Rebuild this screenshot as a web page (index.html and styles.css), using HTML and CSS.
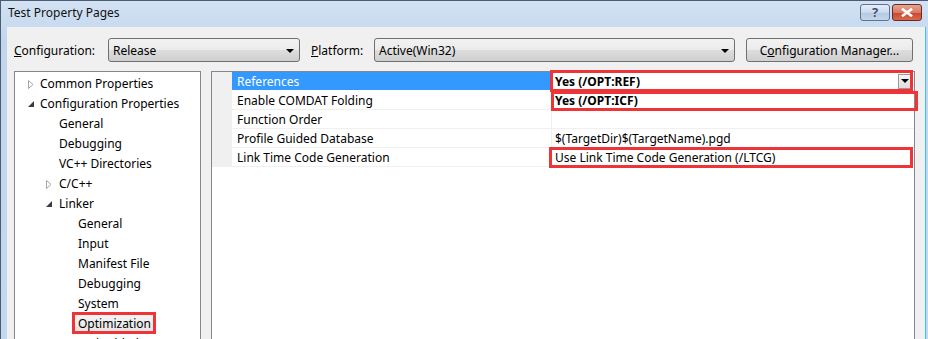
FILE: index.html
```html
<!DOCTYPE html>
<html>
<head>
<meta charset="utf-8">
<link rel="stylesheet" href="styles.css">
</head>
<body>
<div class="window">
  <div class="titlebar">
    <span class="title">Test Property Pages</span>
    <div class="caption-btns">
      <span class="cbtn help">?</span>
      <span class="cbtn close">
        <svg width="12" height="9" viewBox="0 0 12 9"><path d="M2 1.5 L10 7.5 M10 1.5 L2 7.5" stroke="#fff" stroke-width="2.6" stroke-linecap="square" fill="none"/></svg>
      </span>
    </div>
  </div>
  <div class="client">
    <div class="toolbar">
      <label class="lbl lbl-config"><u>C</u>onfiguration:</label>
      <div class="combo combo-config"><span>Release</span><i class="arrow"></i></div>
      <label class="lbl lbl-platform"><u>P</u>latform:</label>
      <div class="combo combo-platform"><span>Active(Win32)</span><i class="arrow"></i></div>
      <button class="btn">C<u>o</u>nfiguration Manager...</button>
    </div>
    <div class="panes">
      <div class="tree">
        <div class="node l0"><span class="exp"><svg width="6" height="9" viewBox="0 0 6 9"><path d="M0.5 0.5 L5 4.5 L0.5 8.5 Z" fill="none" stroke="#a6a6a6"/></svg></span>Common Properties</div>
        <div class="node l0"><span class="exp"><svg width="6" height="6" viewBox="0 0 6 6"><path d="M6 0 L6 6 L0 6 Z" fill="#3c3c3c"/></svg></span>Configuration Properties</div>
        <div class="node l1">General</div>
        <div class="node l1">Debugging</div>
        <div class="node l1">VC++ Directories</div>
        <div class="node l1 has-exp"><span class="exp"><svg width="6" height="9" viewBox="0 0 6 9"><path d="M0.5 0.5 L5 4.5 L0.5 8.5 Z" fill="none" stroke="#a6a6a6"/></svg></span>C/C++</div>
        <div class="node l1 has-exp"><span class="exp"><svg width="6" height="6" viewBox="0 0 6 6"><path d="M6 0 L6 6 L0 6 Z" fill="#3c3c3c"/></svg></span>Linker</div>
        <div class="node l2">General</div>
        <div class="node l2">Input</div>
        <div class="node l2">Manifest File</div>
        <div class="node l2">Debugging</div>
        <div class="node l2">System</div>
        <div class="node l2 sel-row"><span class="sel">Optimization</span></div>
        <div class="node l2">Embedded IDL</div>
      </div>
      <div class="grid">
        <div class="row active">
          <div class="gutter"></div>
          <div class="name">References</div>
          <div class="value bold"><span>Yes (/OPT:REF)</span><span class="ddbtn"><i class="arrow small"></i></span></div>
        </div>
        <div class="row">
          <div class="gutter"></div>
          <div class="name">Enable COMDAT Folding</div>
          <div class="value bold">Yes (/OPT:ICF)</div>
        </div>
        <div class="row">
          <div class="gutter"></div>
          <div class="name">Function Order</div>
          <div class="value"></div>
        </div>
        <div class="row">
          <div class="gutter"></div>
          <div class="name">Profile Guided Database</div>
          <div class="value">$(TargetDir)$(TargetName).pgd</div>
        </div>
        <div class="row">
          <div class="gutter"></div>
          <div class="name">Link Time Code Generation</div>
          <div class="value">Use Link Time Code Generation (/LTCG)</div>
        </div>
        <div class="mark mark1"></div>
        <div class="mark mark2"></div>
        <div class="mark mark3"></div>
      </div>
    </div>
  </div>
</div>
</body>
</html>
```
FILE: styles.css
```css
* { box-sizing: border-box; }
html, body { margin: 0; padding: 0; }
body {
  width: 928px;
  height: 339px;
  overflow: hidden;
  font-family: "Noto Sans", "Segoe UI", sans-serif;
  font-size: 12px;
  color: #000;
  background: #c4d8ee;
}
.window {
  width: 928px;
  height: 339px;
  border-left: 1px solid #4b5d73;
  border-top: 1px solid #4b5d73;
  background: linear-gradient(#d3e2f3, #c1d6ed 40px, #c4d8ee);
  display: flex;
  flex-direction: column;
  overflow: hidden;
}
.titlebar {
  height: 26px;
  flex: none;
  display: flex;
  align-items: flex-start;
  justify-content: space-between;
  padding-left: 7px;
  padding-right: 5px;
}
.title {
  margin-top: 4px;
  line-height: 16px;
  color: #111;
}
.caption-btns { display: flex; gap: 2px; margin-top: 3px; margin-right: 1px; }
.cbtn {
  width: 30px;
  height: 17px;
  border: 1px solid #5d7390;
  border-radius: 3px;
  display: flex;
  align-items: center;
  justify-content: center;
}
.help {
  background: linear-gradient(#e6eef8, #c9d9ec 50%, #b3c8e2 51%, #c4d6ec);
  color: #3d4f66;
  font-weight: bold;
  font-size: 13px;
  line-height: 15px;
  text-shadow: 0 0 1px #fff;
}
.close {
  border-color: #6b2a20;
  background: linear-gradient(#e7a593, #d87a64 50%, #c7462d 51%, #d86a4e);
}
.client {
  flex: 1;
  margin-left: 6px;
  margin-right: 2px;
  background: #f0f0f0;
  border-right: 1px solid #3ec0ef;
  padding: 11px 0 0 7px;
  display: flex;
  flex-direction: column;
}
.toolbar {
  display: flex;
  align-items: center;
  height: 24px;
}
.lbl { line-height: 16px; padding-top: 1px; }
.lbl-config { width: 94px; }
.lbl-platform { width: 63px; margin-left: 11px; }
.combo {
  height: 24px;
  border: 1px solid #707070;
  border-radius: 3px;
  background: linear-gradient(#f2f2f2, #ebebeb 50%, #dddddd 51%, #cfcfcf);
  display: flex;
  align-items: center;
  justify-content: space-between;
  padding: 1px 5px 0 4px;
}
.combo-config { width: 192px; }
.combo-platform { width: 361px; }
.arrow {
  width: 0; height: 0;
  border-left: 4px solid transparent;
  border-right: 4px solid transparent;
  border-top: 4px solid #000;
  display: block;
}
.btn {
  margin-left: 11px;
  width: 167px;
  height: 24px;
  border: 1px solid #707070;
  border-radius: 3px;
  background: linear-gradient(#f2f2f2, #ebebeb 50%, #dddddd 51%, #cfcfcf);
  font: inherit;
  color: #000;
  padding: 1px 0 0;
}
.panes {
  display: flex;
  gap: 10px;
  margin-top: 9px;
  flex: 1;
}
.tree {
  width: 187px;
  height: 300px;
  background: #fff;
  border: 1px solid #828790;
  padding-top: 1px;
}
.node {
  height: 20px;
  line-height: 20px;
  padding-top: 2px;
  display: flex;
  align-items: center;
  white-space: nowrap;
}
.node.l0 { padding-left: 11px; }
.node.l1 { padding-left: 44px; }
.node.l1.has-exp { padding-left: 31px; }
.node.l2 { padding-left: 63px; }
.exp {
  width: 13px;
  display: flex;
  align-items: center;
  justify-content: flex-start;
}
.node.l0 .exp { width: 12px; margin-left: 2px; }
.sel-row { padding-left: 57px !important; padding-top: 0; }
.sel {
  display: inline-block;
  border: 3px solid #ee3437;
  padding: 1px 2px 0 3px;
  line-height: 15px;
  background: linear-gradient(#f4f4f4, #e6e6e6);
}
.grid {
  position: relative;
  width: 704px;
  height: 300px;
  background: #fff;
  border: 1px solid #828790;
}
.row {
  display: flex;
  height: 19px;
}
.gutter {
  width: 20px;
  background: #f0f0f0;
  flex: none;
}
.name {
  width: 320px;
  padding-left: 5px;
  padding-top: 2px;
  line-height: 16px;
  border-bottom: 1px solid #f0f0f0;
  border-right: 1px solid #f0f0f0;
  white-space: nowrap;
}
.row.active .name {
  background: #3399ff;
  color: #fff;
  border-bottom-color: #fff;
}
.value {
  flex: 1;
  padding-left: 3px;
  padding-right: 2px;
  padding-top: 2px;
  line-height: 16px;
  border-bottom: 1px solid #f0f0f0;
  display: flex;
  align-items: center;
  justify-content: space-between;
  white-space: nowrap;
}
.value.bold { font-weight: bold; }
.ddbtn {
  width: 14px;
  height: 15px;
  margin-top: -2px;
  border: 1px solid #9a9a9a;
  background: linear-gradient(#f4f4f4, #dedede);
  display: flex;
  align-items: center;
  justify-content: center;
}
.mark {
  position: absolute;
  border: 3px solid #ee3437;
}
.mark1 { left: 338px; top: -2px; width: 363px; height: 22px; }
.mark2 { left: 339px; top: 19px; width: 367px; height: 20px; }
.mark3 { left: 337px; top: 75px; width: 364px; height: 21px; }
```
